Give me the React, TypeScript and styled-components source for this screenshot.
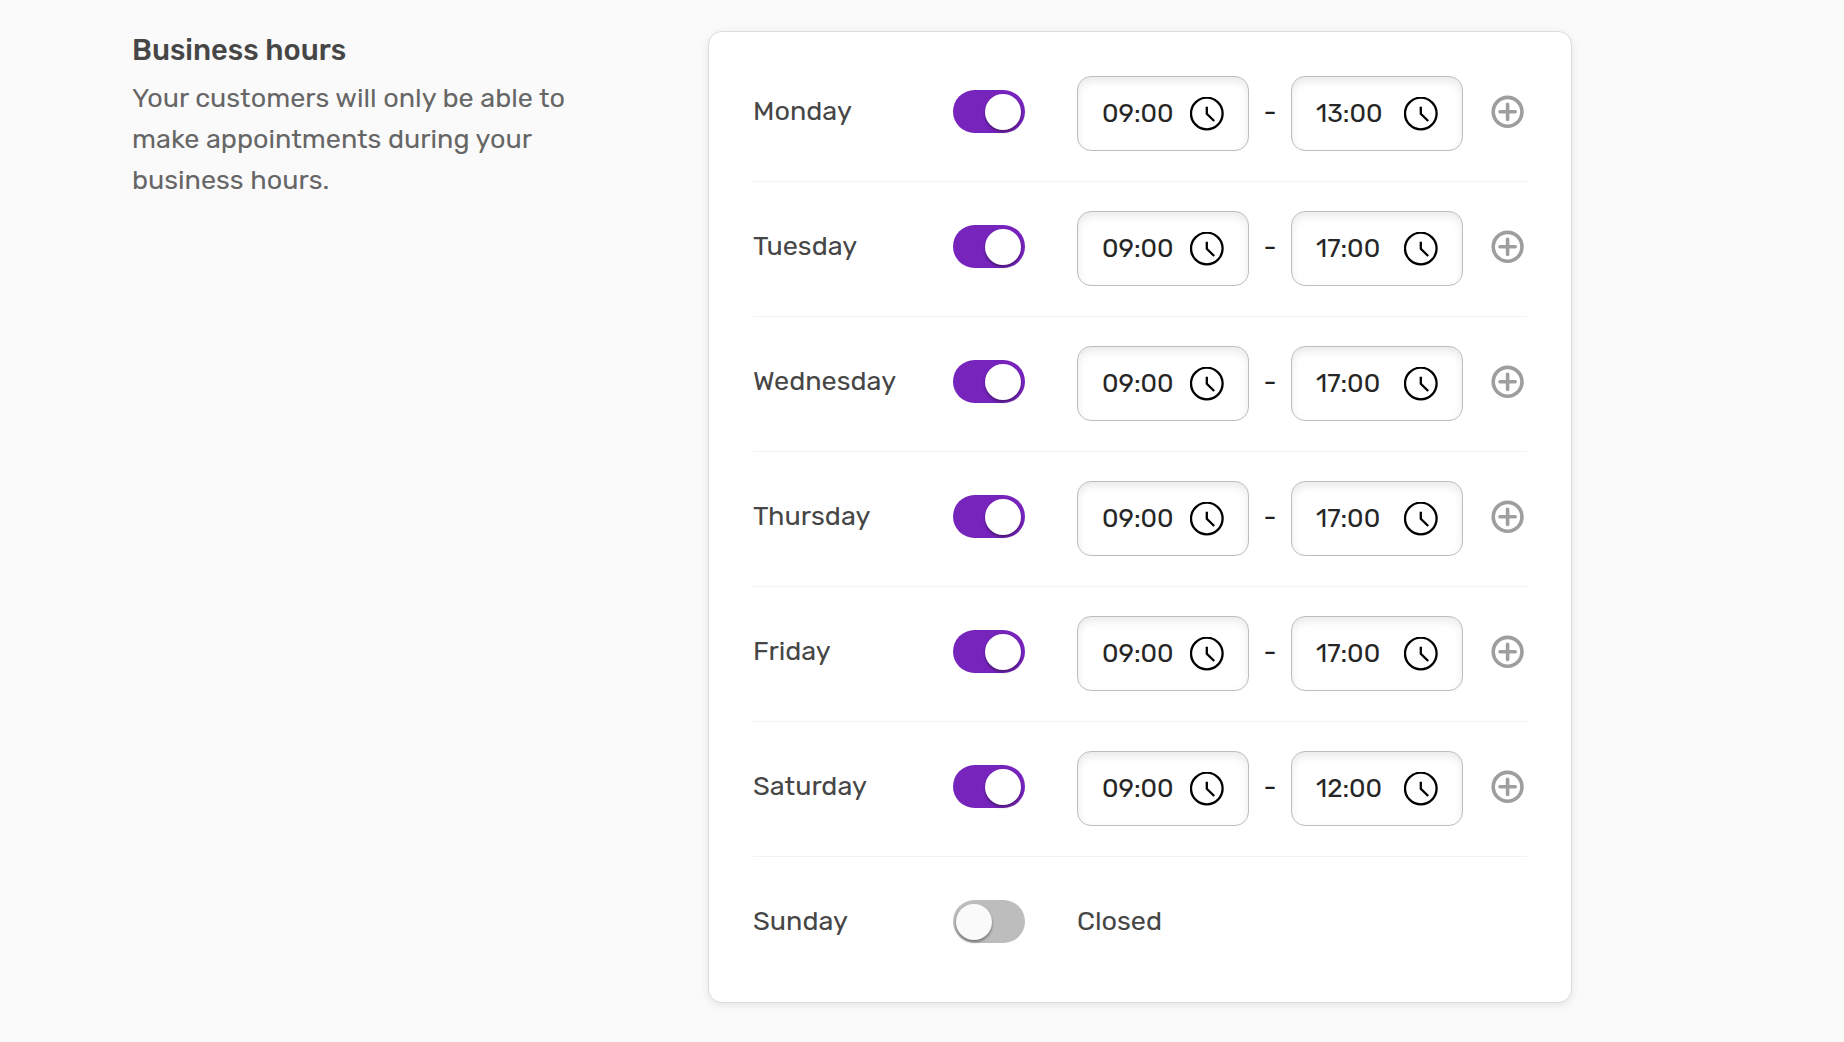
import React, { useState } from "react";
import styled, { createGlobalStyle } from "styled-components";

const GlobalStyle = createGlobalStyle`
  *, *::before, *::after { box-sizing: border-box; }
  body {
    margin: 0;
    background: #fafafa;
    color: #464646;
    font-family: Rubik, Roboto, "Liberation Sans", sans-serif;
    font-size: 27px;
    line-height: 41px;
  }
  button, input { font: inherit; color: inherit; }
`;

const Page = styled.main`
  display: grid;
  grid-template-columns: 2fr 3fr;
  align-items: start;
  max-width: 1844px;
  padding: 31px 272px 31px 132px;
`;

const Intro = styled.section`
  padding-right: 96px;
`;

const Title = styled.h2`
  margin: 0 0 9px;
  font-size: 29px;
  font-weight: 500;
  line-height: 38px;
`;

const Description = styled.p`
  margin: 0;
  color: #666;
`;

const Card = styled.section`
  padding: 15px 44px 11px;
  background: #fff;
  border: 1px solid #dcdcdc;
  border-radius: 14px;
  box-shadow: 0 2px 8px rgba(0, 0, 0, 0.09);
`;

const DayRow = styled.div`
  display: grid;
  grid-template-columns: 200px 124px 1fr auto;
  align-items: center;
  min-height: 135px;
  padding-bottom: 5px;
  border-bottom: 1px solid #f2f2f2;

  &:last-child {
    min-height: 134px;
    border-bottom: 0;
  }
`;

const DayName = styled.label`
  cursor: pointer;
`;

const ClosedText = styled.span`
  color: #464646;
`;

const Switch = styled.input`
  appearance: none;
  display: flex;
  align-items: center;
  width: 72px;
  height: 43px;
  margin: 0;
  padding: 0 4px 0 3px;
  border-radius: 22px;
  background: #bdbdbd;
  cursor: pointer;

  &::before {
    content: "";
    width: 36px;
    height: 36px;
    border-radius: 50%;
    background: #fafafa;
    box-shadow: 0 2px 3px rgba(0, 0, 0, 0.4);
  }

  &:checked {
    justify-content: flex-end;
    background: #7724bd;
  }

  &:checked::before {
    background: #fff;
  }
`;

const Hours = styled.div`
  display: flex;
  align-items: center;
  margin-top: 4px;
`;

const Separator = styled.span`
  width: 42px;
  padding-bottom: 2px;
  text-align: center;
  color: #222;
`;

const TimeBox = styled.div`
  display: flex;
  align-items: center;
  width: 172px;
  height: 75px;
  padding: 0 24px;
  border: 1px solid #bdbdbd;
  border-radius: 14px;
  background: #fff;
  box-shadow: inset 0 4px 8px rgba(0, 0, 0, 0.09);
`;

const TimeInput = styled.input`
  flex: 1;
  min-width: 0;
  padding: 0;
  border: 0;
  outline: 0;
  background: transparent;
  color: #262626;
  font-size: 26px;
`;

const IconButton = styled.button`
  display: flex;
  padding: 0;
  border: 0;
  background: transparent;
  color: ${(p) => p.color};
  cursor: pointer;
`;

const ClockIcon = () => (
  <svg width="34" height="34" viewBox="0 0 34 34" fill="none" stroke="currentColor" strokeWidth="2.3" aria-hidden="true">
    <circle cx="16.8" cy="16.5" r="15.8" />
    <path d="M16.8 9.8V16.8L24.2 24" />
  </svg>
);

const PlusIcon = () => (
  <svg width="38" height="38" viewBox="0 0 38 38" fill="none" stroke="currentColor" strokeWidth="3.6" strokeLinecap="round" aria-hidden="true">
    <circle cx="18.6" cy="18.8" r="14.4" />
    <path d="M18.6 11.2V26.4M11 18.8H26.2" />
  </svg>
);

type TimeFieldProps = { label: string; value: string; onChange: (value: string) => void };

const TimeField = ({ label, value, onChange }: TimeFieldProps) => (
  <TimeBox>
    <TimeInput aria-label={label} value={value} onChange={(e) => onChange(e.target.value)} />
    <IconButton type="button" color="#000" aria-label={`Choose ${label}`}>
      <ClockIcon />
    </IconButton>
  </TimeBox>
);

type Day = { name: string; open: boolean; from: string; to: string };

const initialDays: Day[] = [
  { name: "Monday", open: true, from: "09:00", to: "13:00" },
  { name: "Tuesday", open: true, from: "09:00", to: "17:00" },
  { name: "Wednesday", open: true, from: "09:00", to: "17:00" },
  { name: "Thursday", open: true, from: "09:00", to: "17:00" },
  { name: "Friday", open: true, from: "09:00", to: "17:00" },
  { name: "Saturday", open: true, from: "09:00", to: "12:00" },
  { name: "Sunday", open: false, from: "09:00", to: "17:00" },
];

export default function App() {
  const [days, setDays] = useState(initialDays);
  const update = (name: string, change: Partial<Day>) =>
    setDays((all) => all.map((d) => (d.name === name ? { ...d, ...change } : d)));

  return (
    <>
      <GlobalStyle />
      <Page>
        <Intro>
          <Title>Business hours</Title>
          <Description>
            Your customers will only be able to make appointments during your business hours.
          </Description>
        </Intro>
        <Card>
          {days.map((day) => (
            <DayRow key={day.name}>
              <DayName htmlFor={day.name}>{day.name}</DayName>
              <Switch
                type="checkbox"
                role="switch"
                id={day.name}
                checked={day.open}
                onChange={(e) => update(day.name, { open: e.target.checked })}
              />
              {day.open ? (
                <>
                  <Hours>
                    <TimeField
                      label={`${day.name} opening time`}
                      value={day.from}
                      onChange={(from) => update(day.name, { from })}
                    />
                    <Separator>-</Separator>
                    <TimeField
                      label={`${day.name} closing time`}
                      value={day.to}
                      onChange={(to) => update(day.name, { to })}
                    />
                  </Hours>
                  <IconButton type="button" color="#9e9e9e" aria-label={`Add hours on ${day.name}`}>
                    <PlusIcon />
                  </IconButton>
                </>
              ) : (
                <ClosedText>Closed</ClosedText>
              )}
            </DayRow>
          ))}
        </Card>
      </Page>
    </>
  );
}
